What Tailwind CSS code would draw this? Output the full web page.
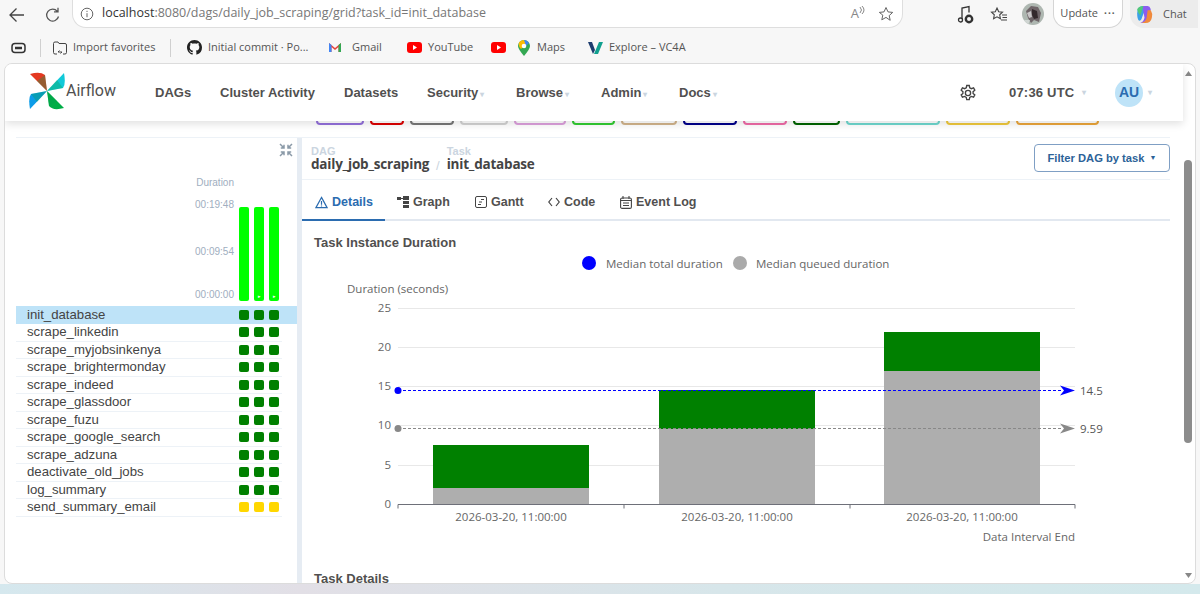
<!DOCTYPE html>
<html lang="en">
<head>
    <meta charset="UTF-8">
    <title>Airflow - init_database</title>
    <script src="https://cdn.jsdelivr.net/npm/@tailwindcss/browser@4"></script>
</head>
<body class="w-[1200px] h-[594px] overflow-hidden bg-[#f7f7f7] font-['Liberation_Sans',sans-serif]">

    <!-- Browser toolbar -->
    <div class="h-[32px] flex items-start font-['Open_Sans',sans-serif] text-[#555]">
        <svg class="ml-[8px] mt-[6px]" width="18" height="18" viewBox="0 0 18 18" fill="none" stroke="#444" stroke-width="1.300"><path d="M16 9H2M8.500 2.500 2 9l6.500 6.500"/></svg>
        <svg class="ml-[18px] mt-[6px]" width="18" height="18" viewBox="0 0 18 18" fill="none" stroke="#555" stroke-width="1.300"><path d="M14.500 10.500a6 6 0 1 1-1.200-5.200M14 1.800v4h-4"/></svg>
        <div class="ml-[10px] w-[831px] h-[28px] bg-white rounded-b-[14px] border border-t-0 border-[#dedede] flex items-center">
            <svg class="ml-[7px]" width="14" height="14" viewBox="0 0 14 14" fill="none" stroke="#666"><circle cx="7" cy="7" r="5.800"/><path d="M7 6.200v4M7 3.800v1.200"/></svg>
            <span class="ml-[8px] text-[12.500px] text-[#777] whitespace-nowrap"><span class="text-[#333]">localhost</span>:8080/dags/daily_job_scraping/grid?task_id=init_database</span>
            <span class="ml-auto text-[13px] text-[#888]">A</span>
            <svg width="8" height="12" viewBox="0 0 8 12" fill="none" stroke="#888" class="mb-[6px]"><path d="M1 2q3 3 0 6M3 1q4 4 0 8"/></svg>
            <svg class="ml-[11px] mr-[8px]" width="16" height="16" viewBox="0 0 16 16" fill="none" stroke="#666"><path d="m8 1.500 2 4.400 4.700.5-3.500 3.200 1 4.700L8 11.400l-4.200 2.400 1-4.700L1.300 6.400l4.700-.5z"/></svg>
        </div>
        <svg class="ml-[54px] mt-[5px]" width="18" height="20" viewBox="0 0 18 20" fill="none" stroke="#333" stroke-width="1.300"><path d="M5 14V3l7-1.500v6"/><circle cx="3.500" cy="15" r="2"/><circle cx="12" cy="14" r="3.200" stroke-width="2.400"/></svg>
        <svg class="ml-[15px] mt-[6px]" width="18" height="18" viewBox="0 0 18 18" fill="none" stroke="#444" stroke-width="1.100"><path d="m7 2 1.700 3.700 3.800.5-2.800 2.600.7 3.900L7 10.800l-3.400 1.900.7-3.900L1.500 6.200l3.800-.5zM12 9h5M12.500 11.500H17M11 14h6"/></svg>
        <svg class="ml-[14px] mt-[3px] rounded-full" width="22" height="22" viewBox="0 0 22 22"><rect width="22" height="22" fill="#aeb7b1"/><path d="M4 8 9 3l7 1 3 6-2 9-5-2-3 3-3-5z" fill="#6e6468"/><path d="M10 6l5 2 1 7-4 1-2-4z" fill="#33282c"/><path d="M5 10l4-2 1 6-3 1z" fill="#c9c6c8"/><path d="M0 17h8l-2 5H0z" fill="#cfd5d2"/></svg>
        <div class="ml-[9px] w-[70px] h-[28px] rounded-b-[14px] border border-t-0 border-[#d5d5d5] bg-white flex items-center justify-center gap-[6px] text-[11px] whitespace-nowrap">Update <span class="font-bold text-[10px] tracking-[1px]">···</span></div>
        <div class="ml-[7px] w-[68px] h-[28px] rounded-bl-[14px] bg-[#ececec] flex items-center text-[11px]">
            <svg class="ml-[4px] mr-[8px]" width="21" height="21" viewBox="0 0 20 20"><path d="M3 9q0-7 6-7h3L8 12q-1 4-3 4-2-1-2-7" fill="#3aa0e8"/><path d="M8 2h5q2 0 3 3l-3 8q-2 5-6 5H6q3-1 4-5z" fill="#8a5cf0"/><path d="M13 6h3q2 3 1 7-1 5-6 5H7q4-1 5-5z" fill="#f08a3c"/><path d="M3 5q2-3 6-3l-3 9q-2-2-3-6" fill="#50c878"/></svg>
            Chat
        </div>
    </div>

    <!-- Bookmarks -->
    <div class="h-[31px] flex items-center text-[11px] text-[#555] font-['Open_Sans',sans-serif] whitespace-nowrap">
        <svg class="ml-[11px]" width="15" height="12" viewBox="0 0 15 12" fill="none" stroke="#333" stroke-width="1.500"><rect x="1" y="1.500" width="13" height="9" rx="3"/><path d="M4 6h7" stroke-width="2.500"/></svg>
        <div class="ml-[14px] w-px h-[18px] bg-[#d0d0d0]"></div>
        <svg class="ml-[11px]" width="16" height="16" viewBox="0 0 16 16" fill="none" stroke="#444"><path d="M5 14H3q-1.500 0-1.500-1.500v-9Q1.500 2 3 2h3l1 1.500h6q1.500 0 1.500 1.500v7.500q0 1.500-1.500 1.500h-2M6 12h4M6 12l1.500-1.500M10 12 8.500 13.500"/></svg>
        <span class="ml-[5px] w-[80px]">Import favorites</span>
        <div class="ml-[17px] w-px h-[18px] bg-[#d0d0d0]"></div>
        <svg class="ml-[16px]" width="15" height="15" viewBox="0 0 16 16" fill="#222"><path d="M8 0C3.580 0 0 3.580 0 8c0 3.540 2.290 6.530 5.470 7.590.4.070.55-.17.55-.38 0-.19-.01-.82-.01-1.490-2.010.37-2.530-.49-2.690-.94-.09-.23-.48-.94-.82-1.130-.28-.15-.68-.52-.01-.53.63-.01 1.080.58 1.230.82.720 1.210 1.870.87 2.330.66.070-.52.280-.87.510-1.070-1.780-.2-3.640-.89-3.640-3.950 0-.87.310-1.590.820-2.150-.08-.2-.36-1.020.08-2.120 0 0 .670-.21 2.200.82.640-.18 1.320-.27 2-.27s1.360.09 2 .27c1.530-1.040 2.200-.82 2.200-.82.440 1.100.160 1.920.080 2.120.51.560.820 1.270.820 2.150 0 3.070-1.870 3.750-3.650 3.950.29.250.540.730.540 1.480 0 1.070-.01 1.930-.01 2.200 0 .210.150.460.550.380A8.010 8.010 0 0 0 16 8c0-4.420-3.580-8-8-8"/></svg>
        <span class="ml-[6px] w-[96px]">Initial commit · Po...</span>
        <svg class="ml-[24px]" width="14" height="11" viewBox="0 0 14 11"><path d="M1 10V1l6 5 6-5v9h-2.500V5L7 8 3.500 5v5z" fill="#e8453c"/><path d="M1 10V1l2.500 2v7z" fill="#4285f4"/><path d="M13 10V1l-2.500 2v7z" fill="#34a853"/></svg>
        <span class="ml-[10px] w-[36px]">Gmail</span>
        <svg class="ml-[19px]" width="15" height="11" viewBox="0 0 15 11"><rect width="15" height="11" rx="3" fill="#f00"/><path d="m6 3 4 2.500L6 8z" fill="#fff"/></svg>
        <span class="ml-[6px] w-[48px]">YouTube</span>
        <svg class="ml-[15px]" width="15" height="11" viewBox="0 0 15 11"><rect width="15" height="11" rx="3" fill="#f00"/><path d="m6 3 4 2.500L6 8z" fill="#fff"/></svg>
        <svg class="ml-[12px]" width="12" height="16" viewBox="0 0 12 16"><path d="M6 0a6 6 0 0 1 6 6q0 3-6 10Q0 9 0 6a6 6 0 0 1 6-6" fill="#34a853"/><path d="M1 2.500A6 6 0 0 1 6 0l3 3-6 6Q0 7 1 2.500" fill="#fbbc04"/><path d="M6 0a6 6 0 0 1 5 3L8 6z" fill="#4285f4"/><circle cx="6" cy="6" r="2.300" fill="#fff"/></svg>
        <span class="ml-[7px] w-[32px]">Maps</span>
        <svg class="ml-[19px]" width="15" height="12" viewBox="0 0 15 12"><path d="M0 0h4l3 8-2 4z" fill="#1d3c6e"/><path d="M6 12 11 0h4l-5 12z" fill="#11a08f"/></svg>
        <span class="ml-[6px]">Explore – VC4A</span>
    </div>

    <!-- Airflow window -->
    <div class="relative ml-[4px] w-[1192px] h-[521px] bg-white rounded-t-lg rounded-b-lg border border-[#dcdcdc] overflow-hidden">
        <nav class="relative z-10 h-[57px] bg-white shadow-[0_3px_8px_rgba(0,0,0,0.12)] mr-[12px] flex items-center text-[13px] font-bold text-[#51504f]">
            <svg class="ml-[24px] mb-[4px]" width="36" height="38" viewBox="0 0 36 38">
                <path d="M18 19 1 2q10-3 15 1z" fill="#e43921"/>
                <path d="M18 19 35 1q2 11-1 15z" fill="#11c9d8"/>
                <path d="M18 19 35 36q-11 3-15-2z" fill="#00ad46"/>
                <path d="M18 19 1 37q-2-11 1-15z" fill="#0c9ce8"/>
                <path d="M18 19 8 9l8-6zM18 19l10-11 6 8zM18 19l10 10-8 5zM18 19 8 30l-6-8z" fill-opacity="0.35" fill="#04a050"/>
            </svg>
            <span class="ml-[1px] mb-[4px] w-[89px] text-[16px] font-normal font-['Roboto',sans-serif] text-[#51504f]">Airflow</span>
            <span class="w-[65px]">DAGs</span>
            <span class="w-[124px]">Cluster Activity</span>
            <span class="w-[83px]">Datasets</span>
            <span class="w-[89px]">Security<span class="text-[#cbd5e0] text-[8px] ml-[2px]">▾</span></span>
            <span class="w-[85px]">Browse<span class="text-[#cbd5e0] text-[8px] ml-[2px]">▾</span></span>
            <span class="w-[78px]">Admin<span class="text-[#cbd5e0] text-[8px] ml-[2px]">▾</span></span>
            <span class="w-[280px]">Docs<span class="text-[#cbd5e0] text-[8px] ml-[2px]">▾</span></span>
            <svg width="18" height="18" viewBox="0 0 24 24" fill="none" stroke="#444" stroke-width="1.800"><path d="M10.300 2h3.400l.6 3 2.200 1.200 2.900-1 1.700 3-2.300 2v2.400l2.300 2-1.700 3-2.900-1-2.200 1.200-.6 3h-3.400l-.6-3-2.200-1.200-2.900 1-1.700-3 2.300-2v-2.400l-2.300-2 1.700-3 2.900 1 2.200-1.200z"/><circle cx="12" cy="12" r="3.500"/></svg>
            <span class="ml-[32px] w-[73px] tracking-[0.2px]">07:36 UTC</span>
            <span class="text-[#cbd5e0] text-[8px] w-[33px]">▾</span>
            <span class="w-[28px] h-[28px] rounded-full bg-[#bee3f8] text-[#2b6cb0] flex items-center justify-center text-[14px]">AU</span>
            <span class="text-[#cbd5e0] text-[8px] ml-[5px]">▾</span>
        </nav>

        <!-- state legend, mostly scrolled under the nav -->
        <div class="h-[4px] flex items-end gap-[6px] pl-[311px] overflow-hidden">
            <div class="w-[48px] h-[12px] shrink-0 rounded-[4px] border-2 border-[#9370db]"></div>
            <div class="w-[34px] h-[12px] shrink-0 rounded-[4px] border-2 border-[#d00]"></div>
            <div class="w-[44px] h-[12px] shrink-0 rounded-[4px] border-2 border-[#777]"></div>
            <div class="w-[48px] h-[12px] shrink-0 rounded-[4px] border-2 border-[#d3d3d3]"></div>
            <div class="w-[52px] h-[12px] shrink-0 rounded-[4px] border-2 border-[#dda0dd]"></div>
            <div class="w-[43px] h-[12px] shrink-0 rounded-[4px] border-2 border-[#32cd32]"></div>
            <div class="w-[56px] h-[12px] shrink-0 rounded-[4px] border-2 border-[#d2b48c]"></div>
            <div class="w-[54px] h-[12px] shrink-0 rounded-[4px] border-2 border-[#00008b]"></div>
            <div class="w-[44px] h-[12px] shrink-0 rounded-[4px] border-2 border-[#f06ba8]"></div>
            <div class="w-[47px] h-[12px] shrink-0 rounded-[4px] border-2 border-[#006400]"></div>
            <div class="w-[94px] h-[12px] shrink-0 rounded-[4px] border-2 border-[#6fd8cf]"></div>
            <div class="w-[64px] h-[12px] shrink-0 rounded-[4px] border-2 border-[#f0c93c]"></div>
            <div class="w-[83px] h-[12px] shrink-0 rounded-[4px] border-2 border-[#eba63a]"></div>
        </div>

        <div class="h-[12px]"></div>

        <div class="flex h-[447px] ml-[11px] mr-[25px] border-t border-[#edf2f7]">
            <!-- Grid -->
            <div class="w-[281px] shrink-0 text-[13.200px] text-[#444]">
                <div class="h-[168px] relative">
                    <svg class="absolute left-[263px] top-[5px]" width="14" height="14" viewBox="0 0 14 14" fill="none" stroke="#8b9aa8" stroke-width="1.500"><path d="M1 1l4 4M5 1.800V5H1.800M13 1 9 5M9 1.800V5h3.200M1 13l4-4M5 12.200V9H1.800M13 13 9 9M9 12.200V9h3.200"/></svg>
                    <div class="flex flex-col items-end w-[218px] pt-[37px] text-[10px] text-[#a0aec0]">
                        <span class="mb-[7px]">Duration</span>
                        <span>00:19:48</span>
                        <span class="mt-[32px]">00:09:54</span>
                        <span class="mt-[28px]">00:00:00</span>
                    </div>
                    <div class="absolute left-[223px] top-[69px] flex gap-[5px]">
                        <div class="w-[10px] h-[94px] rounded-[2px] bg-[#00ff00]"></div>
                        <div class="w-[10px] h-[94px] rounded-[2px] bg-[#00ff00] flex items-end justify-center pb-[1px] text-[5px] text-white">▸</div>
                        <div class="w-[10px] h-[94px] rounded-[2px] bg-[#00ff00] flex items-end justify-center pb-[1px] text-[5px] text-white">▸</div>
                    </div>
                </div>
                <div id="rows">
                    <div class="h-[18px] bg-[#bee3f8] flex items-center pl-[11px]"><span class="w-[212px]">init_database</span><div class="flex gap-[5px]"><i class="w-[10px] h-[10px] rounded-[2px] bg-[#008000]"></i><i class="w-[10px] h-[10px] rounded-[2px] bg-[#008000]"></i><i class="w-[10px] h-[10px] rounded-[2px] bg-[#008000]"></i></div></div>
                    <div class="w-[266px] h-[17.500px] border-b border-[#edf2f7] flex items-center pl-[11px]"><span class="w-[212px]">scrape_linkedin</span><div class="flex gap-[5px]"><i class="w-[10px] h-[10px] rounded-[2px] bg-[#008000]"></i><i class="w-[10px] h-[10px] rounded-[2px] bg-[#008000]"></i><i class="w-[10px] h-[10px] rounded-[2px] bg-[#008000]"></i></div></div>
                    <div class="w-[266px] h-[17.500px] border-b border-[#edf2f7] flex items-center pl-[11px]"><span class="w-[212px]">scrape_myjobsinkenya</span><div class="flex gap-[5px]"><i class="w-[10px] h-[10px] rounded-[2px] bg-[#008000]"></i><i class="w-[10px] h-[10px] rounded-[2px] bg-[#008000]"></i><i class="w-[10px] h-[10px] rounded-[2px] bg-[#008000]"></i></div></div>
                    <div class="w-[266px] h-[17.500px] border-b border-[#edf2f7] flex items-center pl-[11px]"><span class="w-[212px]">scrape_brightermonday</span><div class="flex gap-[5px]"><i class="w-[10px] h-[10px] rounded-[2px] bg-[#008000]"></i><i class="w-[10px] h-[10px] rounded-[2px] bg-[#008000]"></i><i class="w-[10px] h-[10px] rounded-[2px] bg-[#008000]"></i></div></div>
                    <div class="w-[266px] h-[17.500px] border-b border-[#edf2f7] flex items-center pl-[11px]"><span class="w-[212px]">scrape_indeed</span><div class="flex gap-[5px]"><i class="w-[10px] h-[10px] rounded-[2px] bg-[#008000]"></i><i class="w-[10px] h-[10px] rounded-[2px] bg-[#008000]"></i><i class="w-[10px] h-[10px] rounded-[2px] bg-[#008000]"></i></div></div>
                    <div class="w-[266px] h-[17.500px] border-b border-[#edf2f7] flex items-center pl-[11px]"><span class="w-[212px]">scrape_glassdoor</span><div class="flex gap-[5px]"><i class="w-[10px] h-[10px] rounded-[2px] bg-[#008000]"></i><i class="w-[10px] h-[10px] rounded-[2px] bg-[#008000]"></i><i class="w-[10px] h-[10px] rounded-[2px] bg-[#008000]"></i></div></div>
                    <div class="w-[266px] h-[17.500px] border-b border-[#edf2f7] flex items-center pl-[11px]"><span class="w-[212px]">scrape_fuzu</span><div class="flex gap-[5px]"><i class="w-[10px] h-[10px] rounded-[2px] bg-[#008000]"></i><i class="w-[10px] h-[10px] rounded-[2px] bg-[#008000]"></i><i class="w-[10px] h-[10px] rounded-[2px] bg-[#008000]"></i></div></div>
                    <div class="w-[266px] h-[17.500px] border-b border-[#edf2f7] flex items-center pl-[11px]"><span class="w-[212px]">scrape_google_search</span><div class="flex gap-[5px]"><i class="w-[10px] h-[10px] rounded-[2px] bg-[#008000]"></i><i class="w-[10px] h-[10px] rounded-[2px] bg-[#008000]"></i><i class="w-[10px] h-[10px] rounded-[2px] bg-[#008000]"></i></div></div>
                    <div class="w-[266px] h-[17.500px] border-b border-[#edf2f7] flex items-center pl-[11px]"><span class="w-[212px]">scrape_adzuna</span><div class="flex gap-[5px]"><i class="w-[10px] h-[10px] rounded-[2px] bg-[#008000]"></i><i class="w-[10px] h-[10px] rounded-[2px] bg-[#008000]"></i><i class="w-[10px] h-[10px] rounded-[2px] bg-[#008000]"></i></div></div>
                    <div class="w-[266px] h-[17.500px] border-b border-[#edf2f7] flex items-center pl-[11px]"><span class="w-[212px]">deactivate_old_jobs</span><div class="flex gap-[5px]"><i class="w-[10px] h-[10px] rounded-[2px] bg-[#008000]"></i><i class="w-[10px] h-[10px] rounded-[2px] bg-[#008000]"></i><i class="w-[10px] h-[10px] rounded-[2px] bg-[#008000]"></i></div></div>
                    <div class="w-[266px] h-[17.500px] border-b border-[#edf2f7] flex items-center pl-[11px]"><span class="w-[212px]">log_summary</span><div class="flex gap-[5px]"><i class="w-[10px] h-[10px] rounded-[2px] bg-[#008000]"></i><i class="w-[10px] h-[10px] rounded-[2px] bg-[#008000]"></i><i class="w-[10px] h-[10px] rounded-[2px] bg-[#008000]"></i></div></div>
                    <div class="w-[266px] h-[17.500px] border-b border-[#edf2f7] flex items-center pl-[11px]"><span class="w-[212px]">send_summary_email</span><div class="flex gap-[5px]"><i class="w-[10px] h-[10px] rounded-[2px] bg-[#ffd700]"></i><i class="w-[10px] h-[10px] rounded-[2px] bg-[#ffd700]"></i><i class="w-[10px] h-[10px] rounded-[2px] bg-[#ffd700]"></i></div></div>
                </div>
            </div>

            <!-- splitter -->
            <div class="w-[5px] shrink-0 bg-[#e6ecf3]"></div>

            <!-- Details panel -->
            <div class="flex-1 min-w-0 overflow-hidden">
                <div class="h-[42px] border-b border-[#edf2f7] flex items-start pl-[9px] relative">
                    <div class="pt-[8px] w-[124px] leading-none">
                        <div class="text-[11px] font-bold text-[#cbd5e0] h-[11px]">DAG</div>
                        <div class="mt-[1px] text-[13.500px] font-bold text-[#444] font-['Open_Sans',sans-serif] tracking-[-0.2px] whitespace-nowrap">daily_job_scraping</div>
                    </div>
                    <span class="text-[#cbd5e0] text-[13px] mt-[18px] ml-[1px]">/</span>
                    <div class="pt-[8px] ml-[7px] leading-none">
                        <div class="text-[11px] font-bold text-[#cbd5e0] h-[11px]">Task</div>
                        <div class="mt-[1px] text-[13.500px] font-bold text-[#444] font-['Open_Sans',sans-serif] tracking-[-0.2px]">init_database</div>
                    </div>
                    <button class="absolute right-0 top-[6px] w-[136px] h-[28px] rounded border border-[#7f9fc4] text-[#2b6298] text-[11.200px] font-bold flex items-center justify-center gap-[5px]">Filter DAG by task <span class="text-[7px]">▼</span></button>
                </div>

                <div class="h-[41px] pt-[5px] border-b-2 border-[#e2e8f0] flex items-center text-[12.500px] font-bold text-[#51504f] relative">
                    <div class="absolute left-0 bottom-[-2px] w-[83px] h-[2px] bg-[#2b6cb0]"></div>
                    <svg class="ml-[13px] text-[#2b6cb0]" width="13" height="13" viewBox="0 0 14 14" fill="none" stroke="currentColor" stroke-width="1.300"><path d="M7 1.500 13 12.500H1zM7 5.500v4M7 10.300v1"/></svg>
                    <span class="ml-[4px] w-[65px] text-[#2b6cb0]">Details</span>
                    <svg width="12" height="12" viewBox="0 0 12 12" fill="#444"><rect x="0" y="1" width="4" height="3"/><rect x="6" y="0" width="6" height="4"/><rect x="6" y="5" width="6" height="3"/><rect x="6" y="9" width="6" height="3"/><path d="M4 2h2v1H4z"/></svg>
                    <span class="ml-[4px] w-[62px]">Graph</span>
                    <svg width="12" height="12" viewBox="0 0 12 12" fill="none" stroke="#444"><rect x=".5" y=".5" width="11" height="11" rx="1.500"/><path d="M6 3.500h3M4 6h3M3 8.500h3"/></svg>
                    <span class="ml-[4px] w-[57px]">Gantt</span>
                    <svg width="12" height="10" viewBox="0 0 12 10" fill="none" stroke="#444" stroke-width="1.200"><path d="M4 1 .8 5 4 9M8 1l3.200 4L8 9"/></svg>
                    <span class="ml-[4px] w-[56px]">Code</span>
                    <svg width="12" height="13" viewBox="0 0 12 13" fill="none" stroke="#444" stroke-width="1.100"><rect x=".6" y="2" width="10.800" height="10.400" rx="1.500"/><path d="M3 0v3M9 0v3M.6 4.500h10.800M3 7h6M3 9.500h6"/></svg>
                    <span class="ml-[4px]">Event Log</span>
                </div>

                <svg class="block" width="868" height="362" viewBox="302 221 868 362" font-family="'Liberation Sans', sans-serif">
                    <text x="314" y="247" font-size="13" font-weight="bold" fill="#51504f">Task Instance Duration</text>

                    <circle cx="589" cy="263" r="7" fill="#0000ff"/>
                    <text x="606" y="267.500" font-size="11.500" fill="#666" font-family="'Open Sans', sans-serif">Median total duration</text>
                    <circle cx="740" cy="263" r="7" fill="#aaaaaa"/>
                    <text x="756" y="267.500" font-size="11.500" fill="#666" font-family="'Open Sans', sans-serif">Median queued duration</text>

                    <text x="347" y="293" font-size="11.500" fill="#666" font-family="'Open Sans', sans-serif">Duration (seconds)</text>

                    <g stroke="#e8e8e8">
                        <path d="M398 308.500H1075M398 347.500H1075M398 386.500H1075M398 425.500H1075M398 465.500H1075"/>
                    </g>
                    <g font-size="11.500" fill="#666" text-anchor="end" font-family="'Open Sans', sans-serif">
                        <text x="391" y="312">25</text>
                        <text x="391" y="351">20</text>
                        <text x="391" y="390">15</text>
                        <text x="391" y="429">10</text>
                        <text x="391" y="469">5</text>
                        <text x="391" y="508">0</text>
                    </g>

                    <rect x="433" y="445" width="156" height="43" fill="#008000"/>
                    <rect x="433" y="488" width="156" height="16" fill="#aeaeae"/>
                    <rect x="659" y="390" width="156" height="39" fill="#008000"/>
                    <rect x="659" y="429" width="156" height="75" fill="#aeaeae"/>
                    <rect x="884" y="332" width="156" height="39" fill="#008000"/>
                    <rect x="884" y="371" width="156" height="133" fill="#aeaeae"/>

                    <path d="M398 504.500H1075M398 504.500v4M624 504.500v4M850 504.500v4M1075 504.500v4" stroke="#6e7079" fill="none"/>
                    <g font-size="11.500" fill="#666" text-anchor="middle" font-family="'Open Sans', sans-serif">
                        <text x="511" y="521">2026-03-20, 11:00:00</text>
                        <text x="737" y="521">2026-03-20, 11:00:00</text>
                        <text x="962" y="521">2026-03-20, 11:00:00</text>
                    </g>
                    <text x="1075" y="541" font-size="11.500" fill="#666" text-anchor="end" font-family="'Open Sans', sans-serif">Data Interval End</text>

                    <!-- medians -->
                    <circle cx="398" cy="390.500" r="3.500" fill="#0000ff"/>
                    <path d="M398 390.500H1062" stroke="#0000ff" stroke-dasharray="3 2" fill="none"/>
                    <path d="M1075 390.500 1060 385.500 1064 390.500 1060 395.500z" fill="#0000ff"/>
                    <text x="1080" y="394.500" font-size="11.500" fill="#555" font-family="'Open Sans', sans-serif">14.5</text>

                    <circle cx="398" cy="428.500" r="3.500" fill="#888"/>
                    <path d="M398 428.500H1062" stroke="#888" stroke-dasharray="3 2" fill="none"/>
                    <path d="M1075 428.500 1060 423.500 1064 428.500 1060 433.500z" fill="#888"/>
                    <text x="1080" y="432.500" font-size="11.500" fill="#555" font-family="'Open Sans', sans-serif">9.59</text>

                    <text x="314" y="582.500" font-size="13" font-weight="bold" fill="#51504f">Task Details</text>
                </svg>
            </div>
        </div>

        <!-- scrollbar -->
        <svg class="absolute right-[2px] top-[6px]" width="9" height="7" viewBox="0 0 9 7"><path d="M4.500 1 8 6H1z" fill="#888"/></svg>
        <div class="absolute right-[3px] top-[96px] w-[8px] h-[283px] rounded-full bg-[#8c8c8c]"></div>
        <svg class="absolute right-[2px] bottom-[4px]" width="9" height="7" viewBox="0 0 9 7"><path d="M4.500 6 8 1H1z" fill="#888"/></svg>
    </div>

    <!-- desktop peek -->
    <div class="h-[10px] bg-[linear-gradient(90deg,#d5e8ee,#e2dfe6_25%,#d7e6ea_60%,#d4e9ec)]"></div>
</body>
</html>
